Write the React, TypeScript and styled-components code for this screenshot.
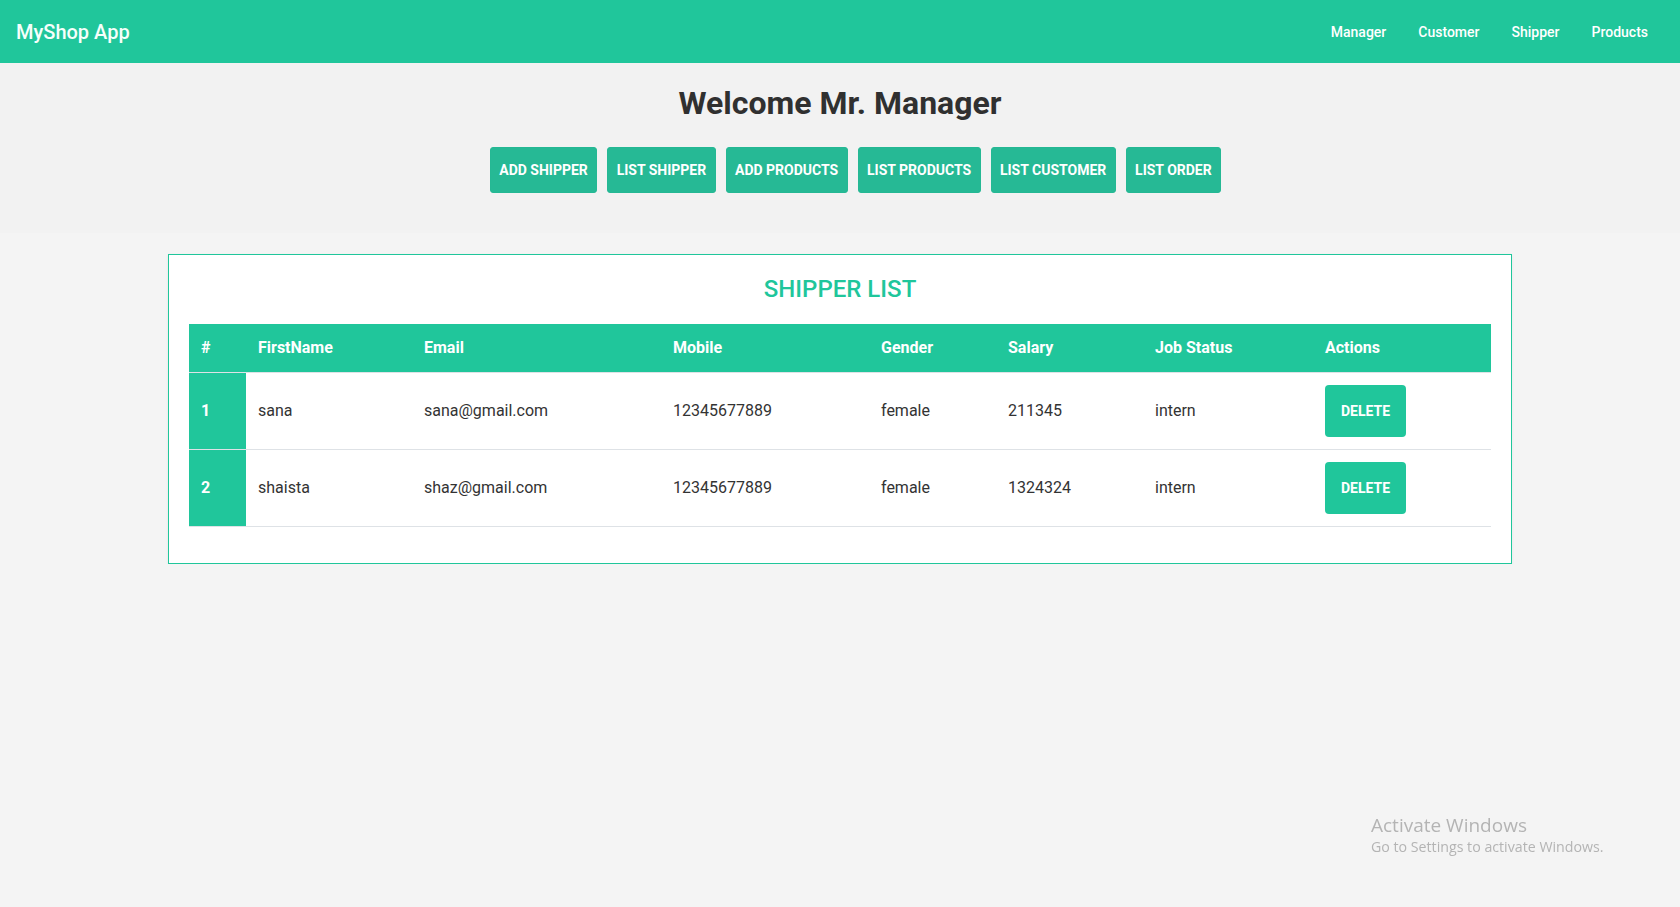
import React from 'react';
import styled, { createGlobalStyle } from 'styled-components';

const TEAL = '#20c69b';

const GlobalStyle = createGlobalStyle`
  html, body {
    margin: 0;
    padding: 0;
  }
  body {
    background-color: #f4f4f4;
    font-family: Roboto, "Liberation Sans", Arial, sans-serif;
    color: #333;
  }
  * {
    box-sizing: border-box;
  }
`;

type Shipper = {
  id: number;
  firstName: string;
  email: string;
  mobile: string;
  gender: string;
  salary: string;
  jobStatus: string;
};

const shippers: Shipper[] = [
  { id: 1, firstName: 'sana', email: 'sana@gmail.com', mobile: '12345677889', gender: 'female', salary: '211345', jobStatus: 'intern' },
  { id: 2, firstName: 'shaista', email: 'shaz@gmail.com', mobile: '12345677889', gender: 'female', salary: '1324324', jobStatus: 'intern' },
];

const columns = [
  { label: '#', width: 57 },
  { label: 'FirstName', width: 166 },
  { label: 'Email', width: 249 },
  { label: 'Mobile', width: 208 },
  { label: 'Gender', width: 127 },
  { label: 'Salary', width: 147 },
  { label: 'Job Status', width: 170 },
  { label: 'Actions', width: 178 },
];

const menu = ['ADD SHIPPER', 'LIST SHIPPER', 'ADD PRODUCTS', 'LIST PRODUCTS', 'LIST CUSTOMER', 'LIST ORDER'];

export default function App() {
  return (
    <>
      <GlobalStyle />
      <Navbar>
        <Brand>MyShop App</Brand>
        <NavLinks>
          <NavLink>Manager</NavLink>
          <NavLink>Customer</NavLink>
          <NavLink>Shipper</NavLink>
          <NavLink>Products</NavLink>
        </NavLinks>
      </Navbar>

      <Hero>
        <Welcome>Welcome Mr. Manager</Welcome>
        <MenuRow>
          {menu.map((m) => (
            <MenuButton key={m}>{m}</MenuButton>
          ))}
        </MenuRow>
      </Hero>

      <Card>
        <CardTitle>SHIPPER LIST</CardTitle>
        <Table>
          <colgroup>
            {columns.map((c) => (
              <col key={c.label} style={{ width: c.width }} />
            ))}
          </colgroup>
          <thead>
            <tr>
              {columns.map((c) => (
                <Th key={c.label}>{c.label}</Th>
              ))}
            </tr>
          </thead>
          <tbody>
            {shippers.map((s) => (
              <tr key={s.id}>
                <IndexCell>{s.id}</IndexCell>
                <Td>{s.firstName}</Td>
                <Td>{s.email}</Td>
                <Td>{s.mobile}</Td>
                <Td>{s.gender}</Td>
                <Td>{s.salary}</Td>
                <Td>{s.jobStatus}</Td>
                <Td>
                  <DeleteButton>DELETE</DeleteButton>
                </Td>
              </tr>
            ))}
          </tbody>
        </Table>
      </Card>

      <Watermark>
        <WatermarkTitle>Activate Windows</WatermarkTitle>
        <WatermarkText>Go to Settings to activate Windows.</WatermarkText>
      </Watermark>
    </>
  );
}

const Navbar = styled.nav`
  height: 63px;
  display: flex;
  align-items: center;
  justify-content: space-between;
  padding: 0 32px 0 16px;
  background-color: ${TEAL};
`;

const Brand = styled.span`
  font-size: 20px;
  font-weight: 500;
  color: #f6fffb;
`;

const NavLinks = styled.div`
  display: flex;
  gap: 32px;
`;

const NavLink = styled.a`
  font-size: 14px;
  font-weight: 500;
  color: #fff;
  cursor: pointer;
`;

const Hero = styled.header`
  background-color: #f2f2f2;
  padding: 21px 0 40px;
  display: flex;
  flex-direction: column;
  align-items: center;
`;

const Welcome = styled.h1`
  margin: 0;
  font-size: 32px;
  line-height: 38px;
  font-weight: 700;
  color: #303030;
`;

const MenuRow = styled.div`
  display: flex;
  gap: 10px;
  margin-top: 25px;
  padding-left: 31px;
`;

const MenuButton = styled.button`
  height: 46px;
  padding: 0 8.4px;
  border: 1px solid #25b894;
  border-radius: 3px;
  background-color: #26b995;
  color: #fff;
  font-family: Roboto, "Liberation Sans", Arial, sans-serif;
  font-size: 14px;
  font-weight: 700;
  cursor: pointer;
`;

const Card = styled.section`
  width: 1344px;
  margin: 21px auto 0;
  padding: 20px 20px 36px;
  background-color: #fff;
  border: 1px solid ${TEAL};
  box-shadow: 0 1px 3px rgba(0, 0, 0, 0.06);
`;

const CardTitle = styled.h2`
  margin: 0 0 20px;
  text-align: center;
  font-size: 24px;
  line-height: 28.8px;
  font-weight: 500;
  color: ${TEAL};
`;

const Table = styled.table`
  width: 100%;
  table-layout: fixed;
  border-collapse: collapse;
`;

const Th = styled.th`
  padding: 12px;
  line-height: 24px;
  text-align: left;
  font-size: 16px;
  font-weight: 700;
  color: #fff;
  background-color: ${TEAL};
  border-bottom: 1px solid #dee2e6;
`;

const Td = styled.td`
  padding: 12px;
  line-height: 24px;
  font-size: 16px;
  color: #333;
  vertical-align: middle;
  border-bottom: 1px solid #dee2e6;
`;

const IndexCell = styled(Td)`
  font-weight: 700;
  color: #fff;
  background-color: ${TEAL};
`;

const DeleteButton = styled.button`
  display: block;
  height: 52px;
  padding: 0 16px;
  border: none;
  border-radius: 4px;
  background-color: ${TEAL};
  color: #fff;
  font-family: Roboto, "Liberation Sans", Arial, sans-serif;
  font-size: 14px;
  font-weight: 700;
  cursor: pointer;
`;

const Watermark = styled.div`
  position: fixed;
  left: 1371px;
  top: 813px;
  color: #b4b4b4;
  font-family: "Open Sans", "Noto Sans", sans-serif;
  pointer-events: none;
`;

const WatermarkTitle = styled.div`
  font-size: 19px;
  line-height: 24px;
`;

const WatermarkText = styled.div`
  font-size: 14.2px;
  line-height: 20px;
`;
